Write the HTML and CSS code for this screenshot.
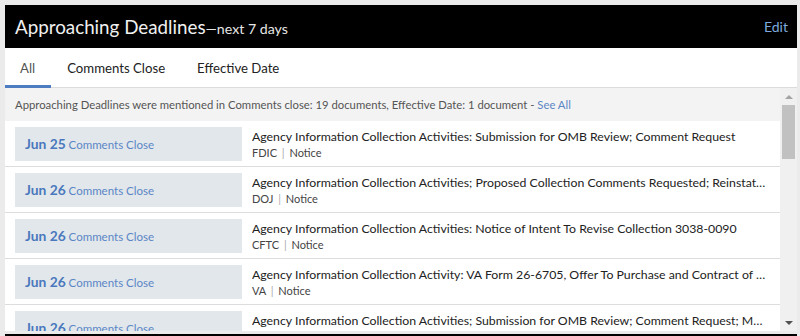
FILE: index.html
```html
<!DOCTYPE html>
<html lang="en">
<head>
    <meta charset="UTF-8">
    <title>Approaching Deadlines</title>
    <link rel="stylesheet" href="styles.css">
</head>
<body>
    <div class="widget">
        <div class="widget-head">
            <h2 class="title">Approaching Deadlines<span class="sub">—next 7 days</span></h2>
            <a class="edit" href="#">Edit</a>
        </div>
        <div class="tabs">
            <div class="tab active">All</div>
            <div class="tab">Comments Close</div>
            <div class="tab">Effective Date</div>
        </div>
        <div class="widget-body">
            <div class="scroll">
                <div class="info">Approaching Deadlines were mentioned in Comments close: 19 documents, Effective Date: 1 document - <a href="#">See All</a></div>
                <div class="row">
                    <div class="date"><b>Jun 25</b> Comments Close</div>
                    <div class="doc">
                        <div class="doc-title">Agency Information Collection Activities: Submission for OMB Review; Comment Request</div>
                        <div class="doc-meta">FDIC <span class="sep">|</span> Notice</div>
                    </div>
                </div>
                <div class="row">
                    <div class="date"><b>Jun 26</b> Comments Close</div>
                    <div class="doc">
                        <div class="doc-title">Agency Information Collection Activities; Proposed Collection Comments Requested; Reinstatement, With Change, of a Previously Approved Collection</div>
                        <div class="doc-meta">DOJ <span class="sep">|</span> Notice</div>
                    </div>
                </div>
                <div class="row">
                    <div class="date"><b>Jun 26</b> Comments Close</div>
                    <div class="doc">
                        <div class="doc-title">Agency Information Collection Activities: Notice of Intent To Revise Collection 3038-0090</div>
                        <div class="doc-meta">CFTC <span class="sep">|</span> Notice</div>
                    </div>
                </div>
                <div class="row">
                    <div class="date"><b>Jun 26</b> Comments Close</div>
                    <div class="doc">
                        <div class="doc-title">Agency Information Collection Activity: VA Form 26-6705, Offer To Purchase and Contract of Sale</div>
                        <div class="doc-meta">VA <span class="sep">|</span> Notice</div>
                    </div>
                </div>
                <div class="row">
                    <div class="date"><b>Jun 26</b> Comments Close</div>
                    <div class="doc">
                        <div class="doc-title">Agency Information Collection Activities; Submission for OMB Review; Comment Request; Multiple Collections</div>
                        <div class="doc-meta">FDIC <span class="sep">|</span> Notice</div>
                    </div>
                </div>
            </div>
            <div class="scrollbar">
                <div class="arrow up"></div>
                <div class="track"><div class="thumb"></div></div>
                <div class="arrow down"></div>
            </div>
        </div>
    </div>
    <div class="next-widget"></div>
</body>
</html>
```

FILE: styles.css
```css
body {
    margin: 0;
    height: 336px;
    overflow: hidden;
    background: #ebebeb;
    font-family: Lato, "Open Sans", sans-serif;
    color: #222;
}
a {
    text-decoration: none;
}
.widget {
    margin: 5px 3px 0 5px;
    background: #fff;
}
.widget-head {
    height: 43px;
    background: #000;
    display: flex;
    align-items: center;
    justify-content: space-between;
    padding: 0 10px;
}
.title {
    margin: 0;
    font-size: 18.8px;
    font-weight: normal;
    color: #f0f0f0;
}
.title .sub {
    font-size: 14.2px;
    color: #e6e6e6;
}
.edit {
    color: #7ea9dd;
    font-size: 14px;
    margin-right: -1px;
}
.tabs {
    display: flex;
    height: 39px;
    border-bottom: 1px solid #dcdcdc;
}
.tab {
    font-size: 13.2px;
    color: #222;
    display: flex;
    align-items: center;
    padding: 0 16px;
}
.tab:first-child {
    padding: 0 16px 0 15px;
    color: #555;
}
.tab.active {
    border-bottom: 3px solid #4d7cc0;
    margin-bottom: -1px;
    padding-top: 2px;
}
.widget-body {
    display: flex;
    height: 243px;
}
.scroll {
    flex: 1;
    overflow: hidden;
}
.info {
    height: 33px;
    line-height: 33px;
    background: #f3f3f3;
    padding-left: 10px;
    font-size: 11.3px;
    color: #555;
}
.info a {
    color: #5b87c5;
}
.row {
    display: flex;
    align-items: center;
    padding: 6px 0 5px 10px;
    border-bottom: 1px solid #dddddd;
}
.date {
    width: 217px;
    height: 34px;
    line-height: 34px;
    flex: none;
    background: #e2e7eb;
    padding-left: 10px;
    font-size: 11.5px;
    color: #5a86c6;
}
.date b {
    font-size: 13.8px;
    color: #4a78bd;
}
.doc {
    margin-left: 10px;
    min-width: 0;
    flex: 1;
    padding: 2px 12px 0 0;
}
.doc-title {
    font-size: 12.3px;
    color: #222;
    white-space: nowrap;
    overflow: hidden;
    text-overflow: ellipsis;
    line-height: 16px;
}
.doc-meta {
    font-size: 11px;
    color: #444;
    line-height: 16px;
}
.doc-meta .sep {
    color: #aaa;
    margin: 0 2px;
}
.scrollbar {
    width: 17px;
    background: #f0f0f0;
    display: flex;
    flex-direction: column;
}
.arrow {
    height: 17px;
    display: flex;
    align-items: center;
    justify-content: center;
}
.arrow::after {
    content: "";
    border-left: 4px solid transparent;
    border-right: 4px solid transparent;
}
.arrow.up::after {
    border-bottom: 4px solid #a3a3a3;
}
.arrow.down::after {
    border-top: 4px solid #505050;
}
.track {
    flex: 1;
}
.thumb {
    margin: 0 2px;
    height: 54px;
    background: #c1c1c1;
}
.next-widget {
    margin: 3px 3px 0 5px;
    height: 10px;
    background: #000;
}
```
